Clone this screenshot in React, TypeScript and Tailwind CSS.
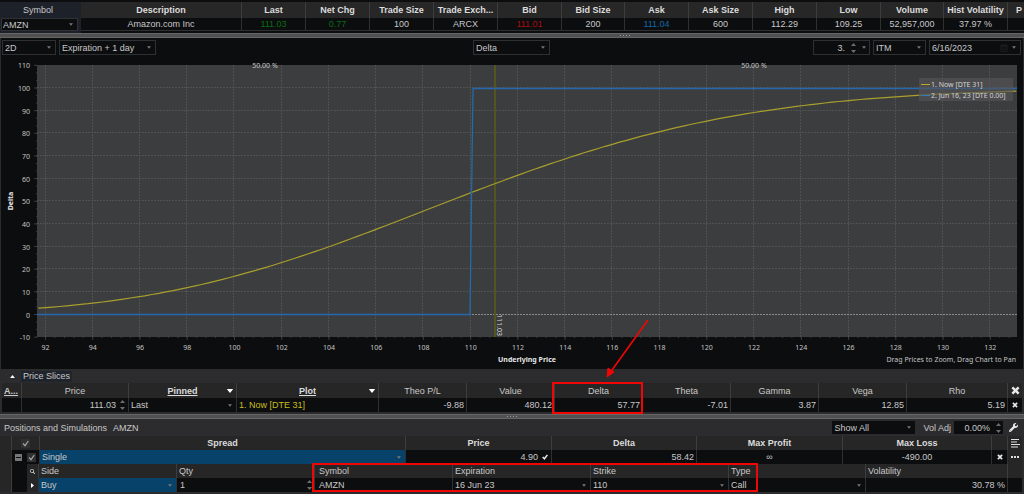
import { useState } from "react";
import type { ReactNode } from "react";
import clsx from "clsx";
import { FaRegCalendarAlt, FaSearch, FaWrench } from "react-icons/fa";

const quoteColumns = [
  { label: "Description", value: "Amazon.com Inc", col: "w-[161px]" },
  { label: "Last", value: "111.03", col: "w-16", color: "text-[#0a6b12]" },
  { label: "Net Chg", value: "0.77", col: "w-16", color: "text-[#0a6b12]" },
  { label: "Trade Size", value: "100", col: "w-16" },
  { label: "Trade Exch...", value: "ARCX", col: "w-16" },
  { label: "Bid", value: "111.01", col: "w-16", color: "text-[#a80c10]" },
  { label: "Bid Size", value: "200", col: "w-[63px]" },
  { label: "Ask", value: "111.04", col: "w-16", color: "text-[#1268a8]" },
  { label: "Ask Size", value: "600", col: "w-16" },
  { label: "High", value: "112.29", col: "w-16" },
  { label: "Low", value: "109.25", col: "w-16" },
  { label: "Volume", value: "52,957,000", col: "w-[63px]" },
  { label: "Hist Volatility", value: "37.97 %", col: "w-16" },
];

const greeks = [
  { label: "Theo P/L", value: "-9.88" },
  { label: "Value", value: "480.12" },
  { label: "Delta", value: "57.77", marked: true },
  { label: "Theta", value: "-7.01" },
  { label: "Gamma", value: "3.87" },
  { label: "Vega", value: "12.85" },
];

function Caret({ className }: { className?: string }) {
  return (
    <svg viewBox="0 0 8 5" className={clsx("pointer-events-none", className)} aria-hidden="true">
      <path d="M0 0h8L4 5z" fill="currentColor" />
    </svg>
  );
}

function Spinner() {
  return (
    <svg viewBox="0 0 5 10" className="h-2.5 w-[5px] shrink-0 text-[#6c6c6c]" aria-hidden="true">
      <path d="M0 3h5L2.5 0zM0 7h5L2.5 10z" fill="currentColor" />
    </svg>
  );
}

interface DropdownProps {
  label: string;
  value: string;
  className?: string;
  children?: ReactNode;
}

function Dropdown({ label, value, className, children }: DropdownProps) {
  return (
    <div className={clsx("relative flex items-center", className)}>
      <select
        aria-label={label}
        defaultValue={value}
        className="h-full w-full appearance-none bg-transparent pl-0.5 pr-3 outline-none"
      >
        <option>{value}</option>
      </select>
      {children}
      <Caret className="absolute right-1 h-[3px] w-1 text-[#777]" />
    </div>
  );
}

function CheckBox({ label }: { label: string }) {
  const [checked, setChecked] = useState(true);
  return (
    <label className="relative mx-auto block h-[9px] w-[9px]">
      <input
        type="checkbox"
        aria-label={label}
        checked={checked}
        onChange={() => setChecked(!checked)}
        className="block h-[9px] w-[9px] appearance-none bg-[#303030]"
      />
      {checked && (
        <svg viewBox="0 0 9 9" className="pointer-events-none absolute inset-0">
          <path d="M2 4.5l2 2.2L7.3 2" fill="none" stroke="#a5a5a5" strokeWidth="1.2" />
        </svg>
      )}
    </label>
  );
}

function Cross({ className }: { className: string }) {
  return (
    <svg viewBox="0 0 10 10" className={clsx("mx-auto block", className)} aria-hidden="true">
      <path d="M1.5 1.5l7 7M8.5 1.5l-7 7" stroke="#e8e8e8" strokeWidth="2.8" />
    </svg>
  );
}

function Splitter({ grip }: { grip: string }) {
  return (
    <div className="relative h-[5px] border-y border-[#666] bg-[#505050]">
      <div className={clsx("absolute top-px flex gap-[2px]", grip)}>
        {[0, 1, 2, 3].map((i) => (
          <span key={i} className="h-px w-px bg-[#999]" />
        ))}
      </div>
    </div>
  );
}

function QuoteBar() {
  return (
    <header className="flex h-[33px] bg-[#0c0d0f] pt-0.5">
      <div className="w-[81px] shrink-0 bg-[#1d2129] pl-px pr-0.5">
        <label htmlFor="symbol" className="block h-4 pr-1 text-center leading-4">
          Symbol
        </label>
        <div className="relative flex h-[13px] w-[77px] items-center border border-[#2f3134] bg-[#0c0d0f]">
          <select
            id="symbol"
            defaultValue="AMZN"
            className="h-full w-full appearance-none bg-transparent pl-px outline-none"
          >
            <option>AMZN</option>
          </select>
          <Caret className="absolute right-1 h-[3px] w-1 text-[#777]" />
        </div>
      </div>
      <table className="h-7 min-w-0 flex-1 table-fixed border-separate border-spacing-0 text-center">
        <colgroup>
          {quoteColumns.map((c) => (
            <col key={c.label} className={c.col} />
          ))}
          <col />
        </colgroup>
        <thead>
          <tr className="h-4 bg-[#272727] text-[#dcdcdc]">
            {quoteColumns.map((c) => (
              <th key={c.label} className="whitespace-nowrap border-r border-[#3d3d3d] p-0 font-bold">
                {c.label}
              </th>
            ))}
            <th className="overflow-hidden p-0 pl-2 text-left">P</th>
          </tr>
        </thead>
        <tbody>
          <tr className="h-3">
            {quoteColumns.map((c) => (
              <td
                key={c.label}
                className={clsx("whitespace-nowrap border-b border-r border-[#303030] p-0", c.color)}
              >
                {c.value}
              </td>
            ))}
            <td className="border-b border-[#303030] p-0" />
          </tr>
        </tbody>
      </table>
    </header>
  );
}

function ChartToolbar() {
  const box = "h-[15px] border border-[#2e3032]";
  return (
    <div className="flex h-[19px] items-center justify-between pl-px pr-0.5">
      <div className="flex flex-1 gap-[3px]">
        <Dropdown label="Chart mode" value="2D" className={clsx(box, "w-[54px]")} />
        <Dropdown label="Date step" value="Expiration + 1 day" className={clsx(box, "w-[97px]")} />
      </div>
      <Dropdown label="Plotted value" value="Delta" className={clsx(box, "w-[77px]")} />
      <div className="flex flex-1 justify-end gap-[3px]">
        <div className={clsx(box, "flex w-[57px] items-center pr-[3px]")}>
          <input
            aria-label="Strike count"
            defaultValue="3."
            className="w-0 flex-1 bg-transparent pr-1.5 text-right outline-none"
          />
          <Spinner />
          <Caret className="ml-1.5 h-[3px] w-1 text-[#777]" />
        </div>
        <Dropdown label="Moneyness" value="ITM" className={clsx(box, "w-[53px]")} />
        <Dropdown label="Expiration date" value="6/16/2023" className={clsx(box, "w-[92px]")}>
          <FaRegCalendarAlt className="pointer-events-none absolute right-3 h-2 w-2 text-[#1f2022]" />
        </Dropdown>
      </div>
    </div>
  );
}

// Chart geometry, in viewBox units
const PLOT = { left: 37, right: 1017, top: 8, bottom: 280 };
const px = (price: number) => 45.5 + (price - 92) * 23.62;
const py = (delta: number) => 257.5 - delta * 2.265;

// Abramowitz-Stegun approximation of the normal CDF
function normCdf(x: number) {
  const t = 1 / (1 + 0.2316419 * Math.abs(x));
  const tail =
    0.3989423 *
    Math.exp((-x * x) / 2) *
    t *
    (0.3193815 + t * (-0.3565638 + t * (1.781478 + t * (-1.821256 + t * 1.330274))));
  return x > 0 ? 1 - tail : tail;
}

function nowCurve() {
  const points: string[] = [];
  for (let p = 91.7; p <= 133.1; p += 0.3) {
    const delta = 100 * normCdf(0.196 + 11.04 * Math.log(p / 111.03));
    points.push(`${px(p).toFixed(1)},${py(delta).toFixed(1)}`);
  }
  return points.join(" ");
}

function DeltaChart() {
  const prices = Array.from({ length: 21 }, (_, i) => 92 + i * 2);
  const deltas = Array.from({ length: 13 }, (_, i) => -10 + i * 10);
  const minorX = Array.from({ length: 104 }, (_, i) => 92 + i * 0.4).filter((p) => px(p) < PLOT.right);
  const minorY = Array.from({ length: 36 }, (_, i) => -10 + (i * 10) / 3);

  return (
    <svg
      viewBox="1 0 1022 312"
      className="block h-auto w-full font-['Noto_Sans',sans-serif] text-[7px]"
      role="img"
      aria-label="Delta by underlying price"
    >
      <rect
        x={PLOT.left}
        y={PLOT.top}
        width={PLOT.right - PLOT.left}
        height={PLOT.bottom - PLOT.top}
        fill="#3c3d3f"
      />
      <g stroke="#505153" strokeDasharray="2 1">
        {prices.map((p) => (
          <line key={p} x1={Math.round(px(p)) - 0.5} x2={Math.round(px(p)) - 0.5} y1={PLOT.top} y2={PLOT.bottom} />
        ))}
        {deltas.slice(1, -1).map((d) => (
          <line
            key={d}
            x1={PLOT.left}
            x2={PLOT.right}
            y1={Math.round(py(d)) - 0.5}
            y2={Math.round(py(d)) - 0.5}
            stroke={d === 0 ? "#8a8b8d" : undefined}
          />
        ))}
      </g>
      <g stroke="#3a3b3d">
        {minorX.map((p) => (
          <line key={p} x1={px(p)} x2={px(p)} y1={PLOT.bottom} y2={PLOT.bottom + 1} />
        ))}
        {minorY.map((d) => (
          <line key={d} x1={PLOT.left - 1} x2={PLOT.left} y1={py(d)} y2={py(d)} />
        ))}
        {prices.map((p) => (
          <line key={p} x1={px(p)} x2={px(p)} y1={PLOT.bottom} y2={PLOT.bottom + 3} />
        ))}
        {deltas.map((d) => (
          <line key={d} x1={PLOT.left - 3} x2={PLOT.left} y1={py(d)} y2={py(d)} />
        ))}
      </g>

      {/* Axis labels */}
      <g fill="#c4c4c4">
        {prices.map((p) => (
          <text key={p} x={px(p)} y="293" textAnchor="middle">
            {p}
          </text>
        ))}
        {deltas.map((d) => (
          <text key={d} x="30" y={py(d) + 3} textAnchor="end">
            {d}
          </text>
        ))}
        <text x="265" y="11" textAnchor="middle">
          50.00 %
        </text>
        <text x="754" y="11" textAnchor="middle">
          50.00 %
        </text>
        <text x="1016" y="305" textAnchor="end">
          Drag Prices to Zoom, Drag Chart to Pan
        </text>
      </g>
      <g fill="#e6e6e6" className="font-bold">
        <text x="527" y="305" textAnchor="middle">
          Underlying Price
        </text>
        <text transform="translate(13 144) rotate(-90)" textAnchor="middle">
          Delta
        </text>
      </g>

      <line x1="495" x2="495" y1={PLOT.top} y2={PLOT.bottom} stroke="#54541f" strokeWidth="2" />
      <text transform="translate(497 257) rotate(90)" fill="#d8d8d8">
        111.03
      </text>

      <polyline points={nowCurve()} fill="none" stroke="#a89f2c" strokeWidth="1.2" />
      <polyline
        points={`${PLOT.left},257.5 470,257.5 473,31.5 ${PLOT.right},31.5`}
        fill="none"
        stroke="#2468ae"
        strokeWidth="1.3"
      />

      {/* Legend */}
      <rect x="919" y="21" width="94" height="23" fill="#545557" fillOpacity="0.65" />
      <line x1="921" x2="930" y1="27.5" y2="27.5" stroke="#b5aa28" />
      <line x1="921" x2="930" y1="38.5" y2="38.5" stroke="#2f7cc4" />
      <g fill="#d4d4d4">
        <text x="931" y="30">
          1. Now [DTE 31]
        </text>
        <text x="931" y="41">
          2. Jun 16, 23 [DTE 0.00]
        </text>
      </g>
    </svg>
  );
}

function SortHeader({ children }: { children: ReactNode }) {
  return (
    <div className="relative flex items-center justify-center">
      <span className="font-bold text-[#dcdcdc] underline">{children}</span>
      <Caret className="absolute right-0.5 h-1 w-2 text-white" />
    </div>
  );
}

function PriceSlices() {
  const th = "border-r border-[#3d3d3d] p-0 font-normal";
  const td = "border-r border-[#303030] p-0";
  return (
    <section className="relative bg-[#2c2c2e] px-0.5 pb-0.5">
      <h2 className="flex h-[14px] items-center gap-1.5 pl-2">
        <Caret className="h-[3px] w-[5px] rotate-180 text-white" />
        <span className="bg-[#20242c] px-0.5 leading-[11px]">Price Slices</span>
      </h2>
      <table className="w-full table-fixed border-separate border-spacing-0">
        <colgroup>
          <col className="w-5" />
          <col className="w-[107px]" />
          <col className="w-[108px]" />
          <col className="w-[142px]" />
          {greeks.map((g) => (
            <col key={g.label} className="w-[88px]" />
          ))}
          <col className="w-[101px]" />
          <col className="w-[14px]" />
        </colgroup>
        <thead>
          <tr className="h-[15px] bg-[#262626]">
            <th className={clsx(th, "text-left")}>
              <span className="pl-0.5 font-bold underline">A...</span>
            </th>
            <th className={th}>Price</th>
            <th className={th}>
              <SortHeader>Pinned</SortHeader>
            </th>
            <th className={th}>
              <SortHeader>Plot</SortHeader>
            </th>
            {greeks.map((g) => (
              <th key={g.label} className={clsx(th, g.marked && "relative")}>
                {g.label}
                {g.marked && (
                  <span className="pointer-events-none absolute -left-[3px] -right-px -top-px h-8 border-2 border-[#f20505]" />
                )}
              </th>
            ))}
            <th className={th}>Rho</th>
            <th className="p-0">
              <button type="button" aria-label="Remove all slices" className="block w-full">
                <Cross className="h-[9px] w-[9px]" />
              </button>
            </th>
          </tr>
        </thead>
        <tbody>
          <tr className="h-[14px] bg-[#0c0d0f] text-right">
            <td className={td} />
            <td className={td}>
              <div className="flex items-center justify-end gap-1 pr-[3px]">
                <input
                  aria-label="Slice price"
                  defaultValue="111.03"
                  className="w-0 flex-1 bg-transparent text-right outline-none"
                />
                <Spinner />
              </div>
            </td>
            <td className={td}>
              <Dropdown label="Pinned to" value="Last" className="h-3" />
            </td>
            <td className={clsx(td, "pl-0.5 text-left text-[#c9bd1c]")}>1. Now [DTE 31]</td>
            {greeks.map((g) => (
              <td key={g.label} className={clsx(td, "pr-0.5")}>
                {g.value}
              </td>
            ))}
            <td className={clsx(td, "pr-0.5")}>5.19</td>
            <td className="p-0">
              <button type="button" aria-label="Remove slice" className="block w-full">
                <Cross className="h-1.5 w-1.5" />
              </button>
            </td>
          </tr>
        </tbody>
      </table>
      <svg
        viewBox="0 0 46 60"
        className="pointer-events-none absolute -top-[50px] left-[59%] h-[60px] w-[46px]"
        aria-hidden="true"
      >
        <path d="M44 1L8 51" stroke="#f20505" strokeWidth="1.6" />
        <path d="M3 58l1-9 6 4z" fill="#f20505" stroke="#f20505" />
      </svg>
    </section>
  );
}

function Positions() {
  const th = "border-r border-[#3d3d3d] p-0 font-bold text-[#dcdcdc]";
  const td = "border-r border-[#303030] p-0";
  const legTh = "border-r border-[#3d3d3d] p-0 pl-0.5 font-normal";
  return (
    <section className="bg-[#2c2c2e] pb-0.5 pr-0.5">
      <div className="flex h-[17px] items-center pl-1">
        <h2>Positions and Simulations</h2>
        <span className="ml-1.5">AMZN</span>
        <div className="ml-auto flex items-center">
          <Dropdown label="Filter" value="Show All" className="h-[13px] w-[83px] bg-[#0c0d0f]" />
          <label htmlFor="vol-adj" className="ml-2 mr-[3px]">
            Vol Adj
          </label>
          <div className="flex h-[13px] w-[49px] items-center gap-1.5 bg-[#0c0d0f] pr-0.5">
            <input
              id="vol-adj"
              defaultValue="0.00%"
              className="w-0 flex-1 bg-transparent text-right outline-none"
            />
            <Spinner />
          </div>
          <button type="button" aria-label="Settings" className="ml-1.5 mr-1">
            <FaWrench className="h-[9px] w-[9px] text-[#e8e8e8]" />
          </button>
        </div>
      </div>

      <table className="w-full table-fixed border-separate border-spacing-0 text-center">
        <colgroup>
          <col className="w-3" />
          <col className="w-3" />
          <col className="w-4" />
          <col className="w-[366px]" />
          <col className="w-[146px]" />
          <col className="w-[145px]" />
          <col className="w-[146px]" />
          <col className="w-[149px]" />
          <col className="w-4" />
          <col className="w-[14px]" />
        </colgroup>
        <thead>
          <tr className="h-[14px] bg-[#262626]">
            <th className={th} />
            <th colSpan={2} className={th}>
              <CheckBox label="Select all" />
            </th>
            <th className={th}>Spread</th>
            <th className={th}>Price</th>
            <th className={th}>Delta</th>
            <th className={th}>Max Profit</th>
            <th className={th}>Max Loss</th>
            <th className={th} />
            <th className="p-0">
              <button type="button" aria-label="Columns" className="block w-full">
                <svg viewBox="0 0 9 9" className="mx-auto h-[9px] w-[9px]">
                  <path d="M0 .5h8M0 3h6M0 5.5h9M0 8h7" stroke="#e0e0e0" strokeWidth="1.2" />
                </svg>
              </button>
            </th>
          </tr>
        </thead>
        <tbody>
          <tr className="h-[14px] bg-[#0c0d0f]">
            <td className={clsx(td, "bg-[#262626]")} />
            <td className="p-0">
              <button
                type="button"
                aria-label="Collapse"
                className="mx-auto flex h-[7px] w-[7px] items-center justify-center bg-[#777]"
              >
                <span className="h-px w-[5px] bg-[#111]" />
              </button>
            </td>
            <td className={td}>
              <CheckBox label="Single" />
            </td>
            <td className={clsx(td, "bg-[#06426a]")}>
              <Dropdown label="Spread" value="Single" className="h-3" />
            </td>
            <td className={td}>
              <div className="flex items-center justify-end gap-1 pr-[3px]">
                4.90
                <svg viewBox="0 0 7 7" className="h-1.5 w-1.5">
                  <path d="M.8 3.5l2 2L6.3 1" fill="none" stroke="#e8e8e8" strokeWidth="1.8" />
                </svg>
              </div>
            </td>
            <td className={clsx(td, "pr-0.5 text-right")}>58.42</td>
            <td className={td}>∞</td>
            <td className={td}>-490.00</td>
            <td className={td}>
              <button type="button" aria-label="Remove position" className="block w-full">
                <Cross className="h-1.5 w-1.5" />
              </button>
            </td>
            <td className="bg-[#262626] p-0">
              <button type="button" aria-label="More" className="flex w-full justify-center gap-px">
                {[0, 1, 2].map((i) => (
                  <span key={i} className="h-0.5 w-0.5 bg-[#ddd]" />
                ))}
              </button>
            </td>
          </tr>
        </tbody>
      </table>

      <div className="relative">
        <table className="w-full table-fixed border-separate border-spacing-0 text-left">
          <colgroup>
            <col className="w-3" />
            <col className="w-[15px]" />
            <col className="w-3" />
            <col className="w-[138px]" />
            <col className="w-[138px]" />
            <col className="w-[138px]" />
            <col className="w-[138px]" />
            <col className="w-[138px]" />
            <col className="w-[137px]" />
            <col className="w-[142px]" />
            <col className="w-[14px]" />
          </colgroup>
          <thead>
            <tr className="h-[14px] bg-[#262626]">
              <td className="border-r border-[#3d3d3d] p-0" />
              <td className="bg-[#0c0d0f] p-0" />
              <td className="border-r border-[#3d3d3d] p-0">
                <FaSearch className="mx-auto h-[5px] w-[5px] text-[#ccc]" />
              </td>
              <th className={legTh}>Side</th>
              <th className={legTh}>Qty</th>
              <th className="border-r border-[#3d3d3d] p-0 pl-1 font-normal">Symbol</th>
              <th className={legTh}>Expiration</th>
              <th className={legTh}>Strike</th>
              <th className={legTh}>Type</th>
              <th className={legTh}>Volatility</th>
              <td className="p-0" />
            </tr>
          </thead>
          <tbody>
            <tr className="h-[14px] bg-[#0c0d0f]">
              <td className="border-r border-[#3d3d3d] bg-[#262626] p-0" />
              <td className="p-0" />
              <td className={clsx(td, "bg-[#262626]")}>
                <Caret className="mx-auto h-[3px] w-[5px] -rotate-90 text-white" />
              </td>
              <td className={clsx(td, "bg-[#06426a]")}>
                <Dropdown label="Side" value="Buy" className="h-3" />
              </td>
              <td className={td}>
                <div className="flex items-center pl-[3px] pr-0.5">
                  <input aria-label="Quantity" defaultValue="1" className="w-0 flex-1 bg-transparent outline-none" />
                  <Spinner />
                </div>
              </td>
              <td className={clsx(td, "pl-1")}>AMZN</td>
              <td className={td}>
                <Dropdown label="Expiration" value="16 Jun 23" className="h-3" />
              </td>
              <td className={td}>
                <Dropdown label="Strike" value="110" className="h-3" />
              </td>
              <td className={td}>
                <Dropdown label="Type" value="Call" className="h-3" />
              </td>
              <td className={clsx(td, "pr-0.5 text-right")}>30.78 %</td>
              <td className="p-0" />
            </tr>
          </tbody>
        </table>
        <div className="pointer-events-none absolute -top-px bottom-0 left-[30.5%] w-[43.7%] border-2 border-[#f20505]" />
      </div>
    </section>
  );
}

export default function App() {
  return (
    <main className="min-w-[900px] overflow-hidden bg-[#0c0d0f] font-['Liberation_Sans',Arial,sans-serif] text-[9px] leading-3 text-[#c8c8c8]">
      <QuoteBar />
      <Splitter grip="left-[60.5%]" />
      <section className="border-x border-[#2c2c2e]">
        <ChartToolbar />
        <DeltaChart />
      </section>
      <PriceSlices />
      <Splitter grip="left-[49.5%]" />
      <Positions />
    </main>
  );
}
